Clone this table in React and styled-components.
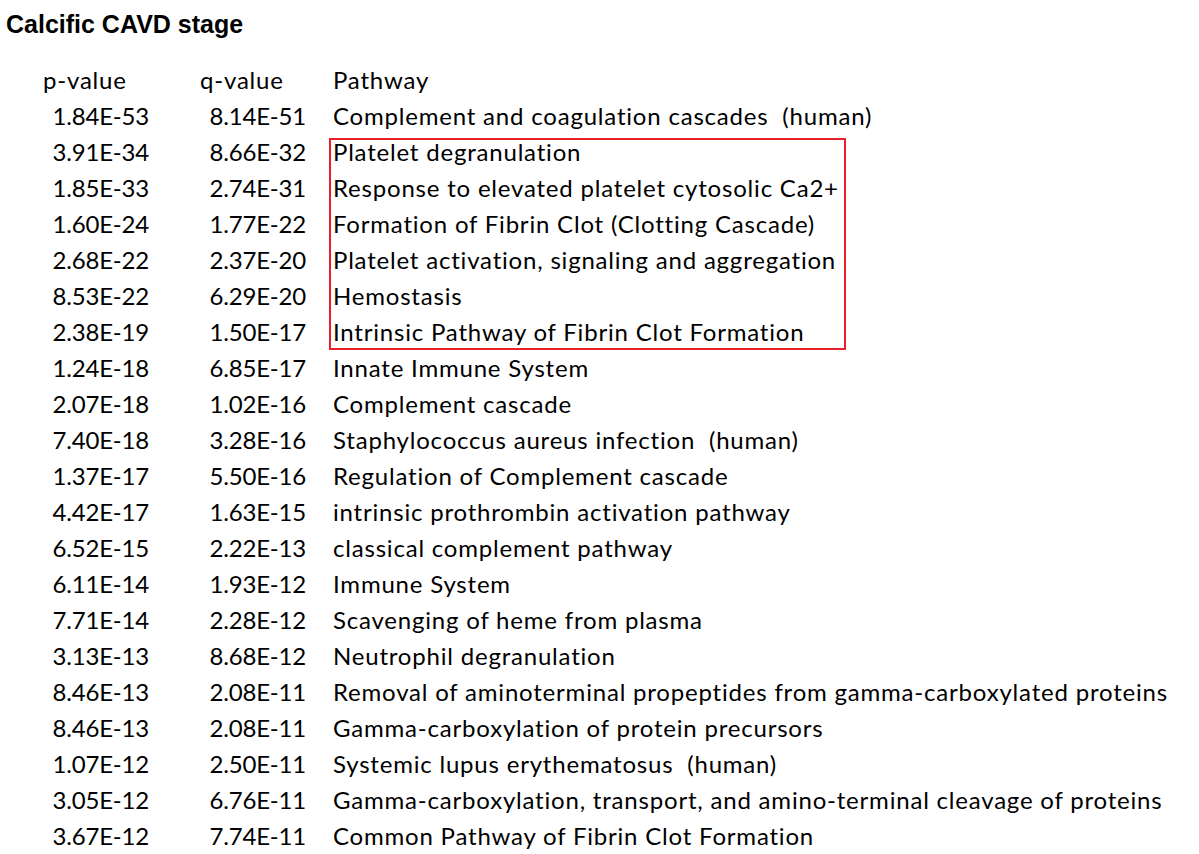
import React from "react";
import styled, { createGlobalStyle } from "styled-components";

const Global = createGlobalStyle`
  html, body { margin: 0; padding: 0; background: #ffffff; }
  body { font-family: "Liberation Sans", Arial, sans-serif; color: #000; }
`;

const Page = styled.div`
  width: 1199px;
  height: 854px;
  overflow: hidden;
  background: #fff;
`;

const Title = styled.h1`
  margin: 0;
  padding: 10px 0 0 6px;
  font-family: "Liberation Sans", Arial, sans-serif;
  font-weight: 700;
  font-size: 25px;
  line-height: 29px;
`;

const Table = styled.div`
  position: relative;
  margin-top: 22px;
  display: grid;
  grid-template-columns: 43px 108px 49px 108px 25px auto;
  grid-auto-rows: 36px;
  font-family: Lato, "Open Sans", sans-serif;
  font-size: 24px;
  color: #000;
`;

const Cell = styled.div`
  display: flex;
  align-items: center;
  white-space: pre;
  grid-column: ${(p) => p.$col};
  justify-content: ${(p) => (p.$num ? "flex-end" : "flex-start")};
  padding-right: ${(p) => (p.$num ? "2px" : "0")};
  letter-spacing: ${(p) => (p.$num ? "-0.2px" : "0.8px")};
`;

const Highlight = styled.div`
  position: absolute;
  left: 329px;
  top: 77px;
  width: 517px;
  height: 212px;
  box-sizing: border-box;
  border: 2px solid #e8202a;
  pointer-events: none;
`;

const rows = [
  ["1.84E-53", "8.14E-51", "Complement and coagulation cascades  (human)"],
  ["3.91E-34", "8.66E-32", "Platelet degranulation"],
  ["1.85E-33", "2.74E-31", "Response to elevated platelet cytosolic Ca2+"],
  ["1.60E-24", "1.77E-22", "Formation of Fibrin Clot (Clotting Cascade)"],
  ["2.68E-22", "2.37E-20", "Platelet activation, signaling and aggregation"],
  ["8.53E-22", "6.29E-20", "Hemostasis"],
  ["2.38E-19", "1.50E-17", "Intrinsic Pathway of Fibrin Clot Formation"],
  ["1.24E-18", "6.85E-17", "Innate Immune System"],
  ["2.07E-18", "1.02E-16", "Complement cascade"],
  ["7.40E-18", "3.28E-16", "Staphylococcus aureus infection  (human)"],
  ["1.37E-17", "5.50E-16", "Regulation of Complement cascade"],
  ["4.42E-17", "1.63E-15", "intrinsic prothrombin activation pathway"],
  ["6.52E-15", "2.22E-13", "classical complement pathway"],
  ["6.11E-14", "1.93E-12", "Immune System"],
  ["7.71E-14", "2.28E-12", "Scavenging of heme from plasma"],
  ["3.13E-13", "8.68E-12", "Neutrophil degranulation"],
  ["8.46E-13", "2.08E-11", "Removal of aminoterminal propeptides from gamma-carboxylated proteins"],
  ["8.46E-13", "2.08E-11", "Gamma-carboxylation of protein precursors"],
  ["1.07E-12", "2.50E-11", "Systemic lupus erythematosus  (human)"],
  ["3.05E-12", "6.76E-11", "Gamma-carboxylation, transport, and amino-terminal cleavage of proteins"],
  ["3.67E-12", "7.74E-11", "Common Pathway of Fibrin Clot Formation"],
];

export default function App() {
  return (
    <Page>
      <Global />
      <Title>Calcific CAVD stage</Title>
      <Table>
        <Cell $col="2">p-value</Cell>
        <Cell $col="4">q-value</Cell>
        <Cell $col="6">Pathway</Cell>
        {rows.map(([p, q, name], i) => (
          <React.Fragment key={i}>
            <Cell $col="2" $num>{p}</Cell>
            <Cell $col="4" $num>{q}</Cell>
            <Cell $col="6">{name}</Cell>
          </React.Fragment>
        ))}
        <Highlight />
      </Table>
    </Page>
  );
}
